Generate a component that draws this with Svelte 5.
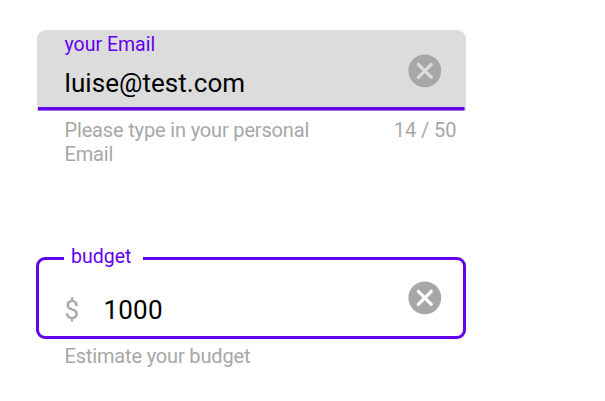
<script>
  let email = $state('luise@test.com');
  let budget = $state('1000');
  const limit = 50;
</script>

{#snippet clearIcon()}
  <svg viewBox="0 0 34 34" aria-hidden="true">
    <circle cx="16.8" cy="16.8" r="16.4" fill="#a7a7a7" />
    <path d="M10.3 10.3 23.3 23.3M23.3 10.3 10.3 23.3" fill="none" stroke="currentColor" stroke-width="3.2" stroke-linecap="round" />
  </svg>
{/snippet}

<main>
  <section>
    <div class="filled">
      <div class="body">
        <div class="label">your Email</div>
        <div class="value email">{email}</div>
      </div>
      <button class="clear" aria-label="Clear email" onclick={() => (email = '')}>{@render clearIcon()}</button>
    </div>
    <div class="help">
      <p>Please type in your personal Email</p>
      <span>{email.length} / {limit}</span>
    </div>
  </section>

  <section>
    <fieldset class="outlined">
      <legend>budget</legend>
      <div class="row">
        <span class="prefix">$</span>
        <span class="value">{budget}</span>
        <button class="clear" aria-label="Clear budget" onclick={() => (budget = '')}>{@render clearIcon()}</button>
      </div>
    </fieldset>
    <div class="help budget-help"><p>Estimate your budget</p></div>
  </section>
</main>

<style>
  :global(body) {
    background: #fff;
  }
  main {
    box-sizing: border-box;
    width: 605px;
    height: 401px;
    padding: 30px 0 0 37px;
    font-family: Roboto, sans-serif;
    display: flex;
    flex-direction: column;
    gap: 79px;
  }
  section {
    width: 429px;
  }
  .filled {
    box-sizing: border-box;
    height: 81px;
    display: flex;
    padding-left: 27.5px;
    border-radius: 9px 9px 0 0;
    background: linear-gradient(#6200ee 0 3px, #a66bf0 3px) 1px 77px / 426.5px 4px no-repeat #dcdcdc;
  }
  .body {
    flex: 1;
  }
  .label {
    margin-top: 3px;
    font-size: 19.5px;
    line-height: 24px;
    color: #6200ee;
  }
  .value {
    font-size: 26px;
    line-height: 34px;
    letter-spacing: 0.2px;
    color: #000;
  }
  .body .value {
    margin-top: 9px;
    letter-spacing: 0.06px;
  }
  .clear {
    width: 34px;
    height: 34px;
    padding: 0;
    border: 0;
    background: none;
    color: #dcdcdc;
  }
  .filled .clear {
    margin: 24px 24px 0 0;
  }
  .clear svg {
    display: block;
    width: 34px;
    height: 34px;
  }
  .help {
    display: flex;
    justify-content: space-between;
    padding: 7px 9.5px 0 27.5px;
    font-size: 20px;
    line-height: 24px;
    letter-spacing: -0.16px;
    color: #a7a7a7;
  }
  .help span {
    letter-spacing: -0.05px;
  }
  .budget-help {
    padding-top: 5px;
  }
  p {
    margin: 0;
    max-width: 260px;
  }
  .outlined {
    box-sizing: border-box;
    height: 94px;
    min-width: 0;
    margin: 0 0 0 -1px;
    padding: 0;
    border: 3px solid #6200ee;
    border-radius: 9px;
  }
  legend {
    margin-left: 25px;
    padding: 0 12px 2px 7px;
    font-size: 19.5px;
    line-height: 24px;
    color: #6200ee;
  }
  .row {
    display: flex;
    align-items: flex-start;
    padding: 10px 21px 0 25.5px;
  }
  .row .value {
    flex: 1;
    padding-top: 12px;
  }
  .prefix {
    width: 39px;
    padding-top: 12px;
    font-size: 26px;
    line-height: 34px;
    color: #a7a7a7;
  }
  .outlined .clear {
    color: #fff;
  }
</style>
